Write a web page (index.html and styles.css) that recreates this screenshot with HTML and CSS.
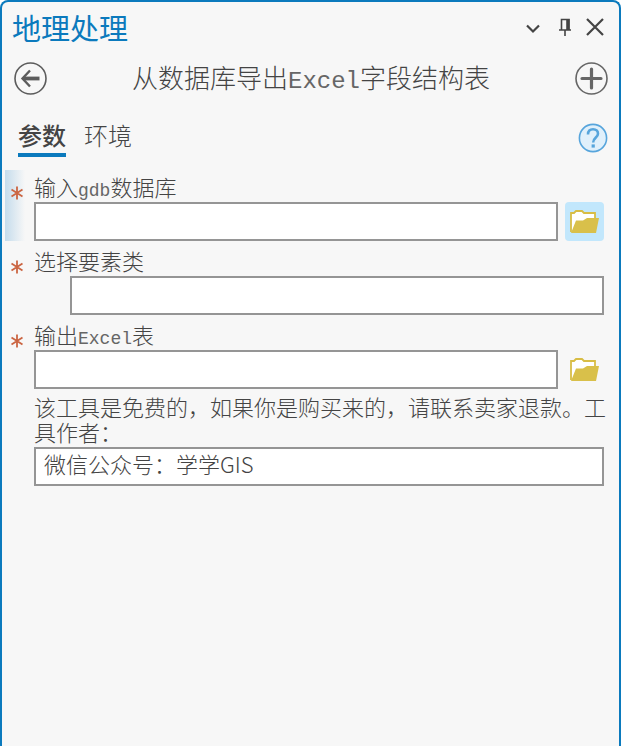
FILE: index.html
```html
<!DOCTYPE html>
<html lang="zh-CN">
<head>
    <meta charset="UTF-8">
    <meta name="viewport" content="width=device-width, initial-scale=1.0">
    <title>地理处理</title>
    <link rel="stylesheet" href="styles.css">
</head>
<body>
    <main class="pane">
        <header class="title-bar">
            <h1 class="pane-title">地理处理</h1>
            <div class="window-buttons">
                <button class="icon-button" type="button" aria-label="菜单">
                    <svg width="24" height="20" viewBox="0 0 24 20"><path d="M6 8.5L12 14.5L18 8.5" fill="none" stroke="#444" stroke-width="2.2"/></svg>
                </button>
                <button class="icon-button" type="button" aria-label="固定">
                    <svg width="16" height="20" viewBox="0 0 16 20"><path d="M4.5 13V2.5H12V13M2 13H14M8 13V19" fill="none" stroke="#444" stroke-width="1.6"/><path d="M9.2 2H12.4V13H9.2Z" fill="#444"/></svg>
                </button>
                <button class="icon-button" type="button" aria-label="关闭">
                    <svg width="20" height="20" viewBox="0 0 20 20"><path d="M2 2L18 18M18 2L2 18" fill="none" stroke="#444" stroke-width="2.2"/></svg>
                </button>
            </div>
        </header>

        <div class="tool-bar">
            <button class="icon-button" type="button" aria-label="返回">
                <svg width="33" height="33" viewBox="0 0 33 33"><circle cx="16.5" cy="16.5" r="15.5" fill="none" stroke="#5c5c5c" stroke-width="1.6"/><path d="M25.5 16.5H9" fill="none" stroke="#5c5c5c" stroke-width="3.8"/><path d="M16 8.5L8.5 16.5L16 24.5" fill="none" stroke="#5c5c5c" stroke-width="2.4"/></svg>
            </button>
            <h2 class="tool-title">从数据库导出<span class="latin">Excel</span>字段结构表</h2>
            <button class="icon-button" type="button" aria-label="添加">
                <svg width="33" height="33" viewBox="0 0 33 33"><circle cx="16.5" cy="16.5" r="15.5" fill="none" stroke="#666" stroke-width="1.6"/><path d="M7 16.5H26M16.5 7V26" fill="none" stroke="#666" stroke-width="3.2" stroke-linecap="round"/></svg>
            </button>
        </div>

        <nav class="tabs">
            <button class="tab active" type="button">参数</button>
            <button class="tab" type="button">环境</button>
            <button class="icon-button help" type="button" aria-label="帮助">
                <svg width="30" height="30" viewBox="0 0 30 30"><circle cx="15" cy="15" r="13.6" fill="#e0f0fb" stroke="#57a5dc" stroke-width="1.6"/><path d="M10 11.4C10 7.8 12 6.2 15 6.2C18.2 6.2 20 8.2 20 10.7C20 14.4 15.2 14.6 15.2 19.4" fill="none" stroke="#57a5dc" stroke-width="2.6"/><path d="M13.6 21.4H16.8V24.6H13.6Z" fill="#57a5dc"/></svg>
            </button>
        </nav>

        <form class="params">
            <div class="param current">
                <svg class="required" width="12" height="14" viewBox="0 0 12 14"><path d="M6 0.5V13.5M0.5 3.5L11.5 10.5M11.5 3.5L0.5 10.5" fill="none" stroke="#cb6542" stroke-width="1.8"/></svg>
                <label class="param-label" for="input-gdb">输入<span class="latin">gdb</span>数据库</label>
                <div class="field">
                    <input class="text-box" type="text" id="input-gdb">
                    <button class="browse selected" type="button" aria-label="浏览">
                        <svg width="30" height="24" viewBox="0 0 30 24"><path d="M1 22V3H4L6 1H12L14 3H25V9" fill="#fff" stroke="#d8bd45" stroke-width="1.8"/><path d="M1 23L6 10.5H13L17 8H29L26 23Z" fill="#d9c04a"/></svg>
                    </button>
                </div>
            </div>

            <div class="param">
                <svg class="required" width="12" height="14" viewBox="0 0 12 14"><path d="M6 0.5V13.5M0.5 3.5L11.5 10.5M11.5 3.5L0.5 10.5" fill="none" stroke="#cb6542" stroke-width="1.8"/></svg>
                <label class="param-label" for="feature-class">选择要素类</label>
                <div class="field indent">
                    <input class="text-box" type="text" id="feature-class">
                </div>
            </div>

            <div class="param">
                <svg class="required" width="12" height="14" viewBox="0 0 12 14"><path d="M6 0.5V13.5M0.5 3.5L11.5 10.5M11.5 3.5L0.5 10.5" fill="none" stroke="#cb6542" stroke-width="1.8"/></svg>
                <label class="param-label" for="output-excel">输出<span class="latin">Excel</span>表</label>
                <div class="field">
                    <input class="text-box" type="text" id="output-excel">
                    <button class="browse" type="button" aria-label="浏览">
                        <svg width="30" height="24" viewBox="0 0 30 24"><path d="M1 22V3H4L6 1H12L14 3H25V9" fill="#fff" stroke="#d8bd45" stroke-width="1.8"/><path d="M1 23L6 10.5H13L17 8H29L26 23Z" fill="#d9c04a"/></svg>
                    </button>
                </div>
            </div>

            <div class="param">
                <label class="note" for="author">该工具是免费的，如果你是购买来的，请联系卖家退款。工具作者：</label>
                <div class="field">
                    <input class="text-box" type="text" id="author" value="微信公众号：学学GIS">
                </div>
            </div>
        </form>
    </main>
</body>
</html>
```

FILE: styles.css
```css
* {
    box-sizing: border-box;
}

body {
    margin: 0;
    background-color: #fff;
    color: #444;
    font-family: "Noto Sans CJK SC", sans-serif;
    font-weight: 300;
}

h1, h2 {
    margin: 0;
    font-weight: 300;
}

button, input {
    font-family: inherit;
    font-weight: inherit;
    color: inherit;
}

svg {
    display: block;
}

.pane {
    min-height: 100vh;
    border: 2px solid #0b7abd;
    border-bottom: none;
    border-radius: 8px 8px 0 0;
    background-color: #f7f7f7;
}

.latin {
    color: #666;
    font-family: "Liberation Mono", monospace;
}

.icon-button {
    padding: 0;
    border: none;
    background: none;
}

/* title bar */
.title-bar {
    display: flex;
    justify-content: space-between;
    align-items: center;
    height: 50px;
    padding: 0 14px 0 10px;
}

.pane-title {
    color: #0b7abd;
    font-size: 29px;
    line-height: 50px;
    font-weight: 400;
}

.window-buttons {
    display: flex;
    gap: 12px;
}

/* tool name */
.tool-bar {
    display: flex;
    justify-content: space-between;
    align-items: center;
    height: 52px;
    padding: 0 11px 0 12px;
}

.tool-title {
    height: 52px;
    font-size: 26px;
    line-height: 50px;
}

.tool-title .latin {
    font-size: 24px;
}

/* tabs */
.tabs {
    display: flex;
    align-items: flex-end;
    gap: 18px;
    padding: 14px 11px 13px 16px;
}

.tab {
    padding: 0 0 2px;
    border: none;
    border-bottom: 4px solid transparent;
    background: none;
    font-size: 24px;
    line-height: 33px;
}

.tab.active {
    border-bottom-color: #0b7abd;
    font-weight: 500;
}

.help {
    align-self: center;
    margin-left: auto;
}

/* parameters */
.params {
    display: flex;
    flex-direction: column;
    gap: 3px;
    padding: 0 15px 0 3px;
}

.param {
    display: grid;
    grid-template-columns: 29px 1fr;
    padding-top: 2px;
}

.current {
    background: linear-gradient(to right, #c5dcec, #f7f7f7 20px);
}

.required {
    margin: 14px 0 0 6px;
}

.param-label {
    height: 30px;
    font-size: 22px;
    line-height: 28px;
}

.param-label .latin {
    font-size: 18px;
}

.field {
    grid-column: 2;
    display: flex;
    gap: 7px;
}

.indent {
    padding-left: 36px;
}

.text-box {
    flex: 1;
    min-width: 0;
    height: 39px;
    padding: 0 8px 8px;
    border: 2px solid #959595;
    border-radius: 0;
    background-color: #fff;
    font-size: 22px;
}

.browse {
    display: flex;
    align-items: center;
    justify-content: center;
    width: 39px;
    padding: 0;
    border: none;
    border-radius: 4px;
    background: none;
}

.browse.selected {
    background-color: #c2e7fc;
}

.note {
    grid-column: 2;
    margin-right: -4px;
    padding-bottom: 3px;
    font-size: 22px;
    line-height: 25px;
}
```
